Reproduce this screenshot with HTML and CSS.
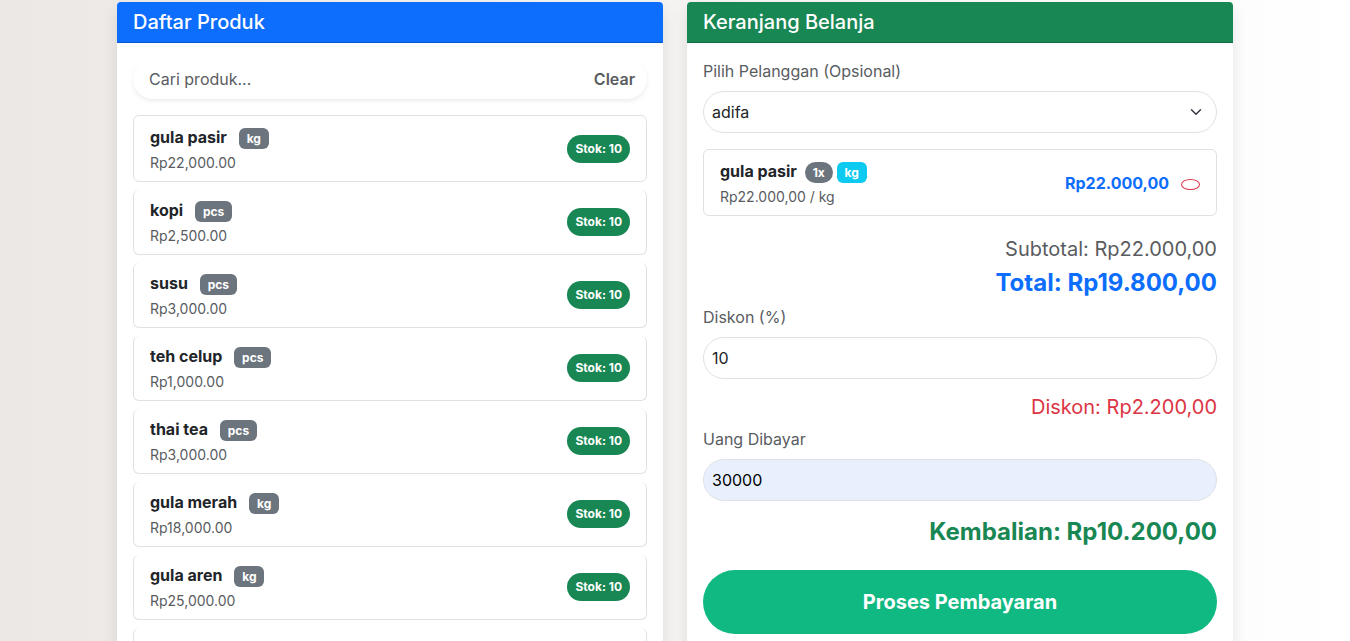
FILE: index.html
```html
<!DOCTYPE html>
<html lang="id">
<head>
<meta charset="UTF-8">
<meta name="viewport" content="width=device-width, initial-scale=1">
<title>Kasir</title>
<link rel="stylesheet" href="styles.css">
</head>
<body>
<main class="container">
    <section class="card">
        <h5 class="card-header bg-primary">Daftar Produk</h5>
        <div class="card-body">
            <div class="search">
                <input type="text" id="search" placeholder="Cari produk..." aria-label="Cari produk">
                <button type="button" id="clearSearch">Clear</button>
            </div>
            <ul class="list" id="productList">
                <li class="item">
                    <div>
                        <div class="name">gula pasir <span class="badge unit">kg</span></div>
                        <div class="price">Rp22,000.00</div>
                    </div>
                    <span class="badge stock">Stok: 10</span>
                </li>
                <li class="item">
                    <div>
                        <div class="name">kopi <span class="badge unit">pcs</span></div>
                        <div class="price">Rp2,500.00</div>
                    </div>
                    <span class="badge stock">Stok: 10</span>
                </li>
                <li class="item">
                    <div>
                        <div class="name">susu <span class="badge unit">pcs</span></div>
                        <div class="price">Rp3,000.00</div>
                    </div>
                    <span class="badge stock">Stok: 10</span>
                </li>
                <li class="item">
                    <div>
                        <div class="name">teh celup <span class="badge unit">pcs</span></div>
                        <div class="price">Rp1,000.00</div>
                    </div>
                    <span class="badge stock">Stok: 10</span>
                </li>
                <li class="item">
                    <div>
                        <div class="name">thai tea <span class="badge unit">pcs</span></div>
                        <div class="price">Rp3,000.00</div>
                    </div>
                    <span class="badge stock">Stok: 10</span>
                </li>
                <li class="item">
                    <div>
                        <div class="name">gula merah <span class="badge unit">kg</span></div>
                        <div class="price">Rp18,000.00</div>
                    </div>
                    <span class="badge stock">Stok: 10</span>
                </li>
                <li class="item">
                    <div>
                        <div class="name">gula aren <span class="badge unit">kg</span></div>
                        <div class="price">Rp25,000.00</div>
                    </div>
                    <span class="badge stock">Stok: 10</span>
                </li>
                <li class="item"></li>
            </ul>
        </div>
    </section>

    <section class="card">
        <h5 class="card-header bg-success">Keranjang Belanja</h5>
        <div class="card-body">
            <label for="customer">Pilih Pelanggan (Opsional)</label>
            <select class="field" id="customer">
                <option selected>adifa</option>
            </select>

            <ul class="list cart" id="cart">
                <li class="item">
                    <div>
                        <div class="name">gula pasir <span class="badge qty">1x</span> <span class="badge info">kg</span></div>
                        <div class="price">Rp22.000,00 / kg</div>
                    </div>
                    <div class="line-total">
                        <strong>Rp22.000,00</strong>
                        <button type="button" class="remove" aria-label="Hapus"></button>
                    </div>
                </li>
            </ul>

            <p class="subtotal">Subtotal: Rp22.000,00</p>
            <h4 class="total">Total: Rp19.800,00</h4>

            <label for="discount">Diskon (%)</label>
            <input type="text" inputmode="numeric" class="field" id="discount" value="10">
            <p class="discount">Diskon: Rp2.200,00</p>

            <label for="paid">Uang Dibayar</label>
            <input type="text" inputmode="numeric" class="field filled" id="paid" value="30000">
            <h4 class="change">Kembalian: Rp10.200,00</h4>

            <button type="submit" class="pay">Proses Pembayaran</button>
        </div>
    </section>
</main>
</body>
</html>
```
FILE: styles.css
```css
* {
    box-sizing: border-box;
}

body {
    margin: 0;
    font-family: Inter, sans-serif;
    font-size: 16px;
    line-height: 24px;
    color: #212529;
    background: linear-gradient(to right, #ece8e5, #ffffff);
}

h4, h5, p, ul {
    margin: 0;
    padding: 0;
}

button, input, select {
    font-family: inherit;
    font-size: 16px;
    color: inherit;
}

.container {
    display: grid;
    grid-template-columns: repeat(auto-fit, minmax(320px, 1fr));
    gap: 24px;
    max-width: 1140px;
    height: 100vh;
    margin: 0 auto;
    padding: 2px 12px 0;
    overflow: hidden;
}

.card {
    background-color: #fff;
    border-radius: 4px;
    box-shadow: 0 8px 16px rgba(0, 0, 0, 0.1);
}

.card-header {
    padding: 8px 16px;
    font-size: 20px;
    font-weight: 500;
    color: #fff;
    border-bottom: 1px solid rgba(0, 0, 0, 0.18);
    border-radius: 4px 4px 0 0;
}

.bg-primary {
    background-color: #0d6efd;
}

.bg-success {
    background-color: #198754;
}

.card-body {
    padding: 16px;
}

/* search */
.search {
    display: flex;
    height: 40px;
    margin-bottom: 16px;
    border-radius: 20px;
    box-shadow: 0 2px 4px rgba(0, 0, 0, 0.08);
}

.search input {
    flex: 1;
    min-width: 0;
    padding: 0 16px;
    border: none;
    background: none;
}

.search input::placeholder {
    color: #595c5f;
    opacity: 1;
}

.search button {
    padding: 0 12px;
    border: none;
    background: none;
    font-weight: 600;
    color: #595c5f;
    cursor: pointer;
}

/* product and cart rows */
.list {
    display: flex;
    flex-direction: column;
    gap: 8px;
    list-style: none;
}

.item {
    display: flex;
    justify-content: space-between;
    align-items: center;
    min-height: 65px;
    padding: 8px 16px;
    border: 1px solid #dee2e6;
    border-top-width: 0;
    border-radius: 6px;
}

.item:first-child {
    min-height: 67px;
    border-top-width: 1px;
}

.name {
    margin-bottom: 4px;
    font-weight: 700;
}

.price {
    font-size: 14px;
    line-height: 20px;
    color: #595c5f;
}

.badge {
    display: inline-block;
    padding: 4px 8px;
    border-radius: 6px;
    font-size: 12px;
    font-weight: 700;
    line-height: 13px;
    color: #fff;
}

.unit {
    margin-left: 8px;
    background-color: #6c757d;
}

.qty {
    margin-left: 4px;
    border-radius: 12px;
    background-color: #6c757d;
}

.info {
    background-color: #0dcaf0;
}

.stock {
    padding: 8px;
    border-radius: 14px;
    line-height: 12px;
    background-color: #198754;
}

.cart {
    margin-bottom: 16px;
}

.line-total {
    display: flex;
    align-items: center;
    gap: 12px;
    color: #0d6efd;
}

.line-total strong {
    font-weight: 700;
}

.remove {
    width: 19px;
    height: 11px;
    margin-top: 3px;
    padding: 0;
    border: 1px solid #dc3545;
    border-radius: 50%;
    background: none;
    cursor: pointer;
}

/* payment form */
label {
    display: block;
    margin-bottom: 8px;
    color: #595c5f;
}

.field {
    display: block;
    width: 100%;
    height: 42px;
    margin-bottom: 16px;
    padding: 0 8px;
    border: 1px solid #dee2e6;
    border-radius: 21px;
    background-color: #fff;
}

select.field {
    appearance: none;
    background-image: url("data:image/svg+xml,%3Csvg xmlns='http://www.w3.org/2000/svg' viewBox='0 0 16 16'%3E%3Cpath fill='none' stroke='%23343a40' stroke-linecap='round' stroke-linejoin='round' stroke-width='2' d='m2 5 6 6 6-6'/%3E%3C/svg%3E");
    background-repeat: no-repeat;
    background-position: right 14px center;
    background-size: 12px;
}

.filled {
    background-color: #e8f0fe;
    color: #000;
}

.subtotal {
    margin-bottom: 2px;
    font-size: 20px;
    line-height: 34px;
    text-align: right;
    color: #595c5f;
}

.discount {
    margin-bottom: 8px;
    font-size: 20px;
    text-align: right;
    color: #dc3545;
}

.total, .change {
    font-size: 24px;
    font-weight: 700;
    line-height: 29px;
    text-align: right;
}

.total {
    margin-bottom: 8px;
    color: #0d6efd;
}

.change {
    margin-bottom: 24px;
    color: #198754;
}

.pay {
    width: 100%;
    height: 64px;
    border: none;
    border-radius: 32px;
    background-color: #10b981;
    font-size: 20px;
    font-weight: 700;
    color: #fff;
    cursor: pointer;
}
```
